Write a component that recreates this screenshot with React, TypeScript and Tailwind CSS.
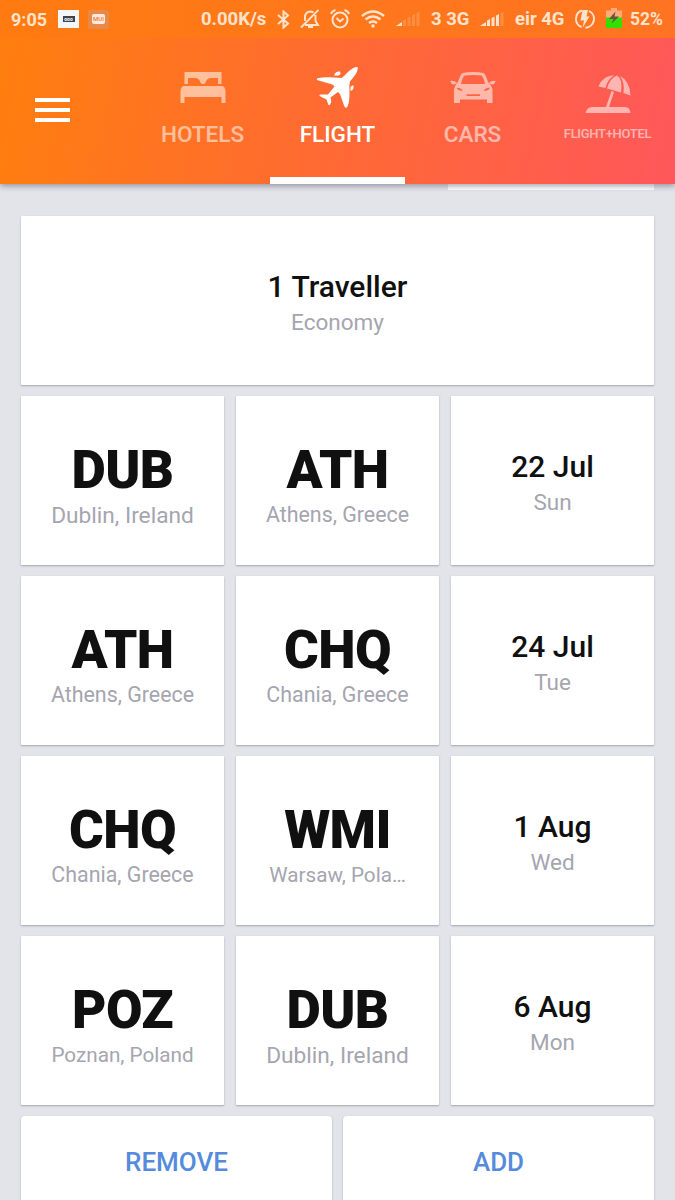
import React from 'react';
import clsx from 'clsx';

const flights = [
  { from: 'DUB', fromCity: 'Dublin, Ireland', to: 'ATH', toCity: 'Athens, Greece', date: '22 Jul', day: 'Sun' },
  { from: 'ATH', fromCity: 'Athens, Greece', to: 'CHQ', toCity: 'Chania, Greece', date: '24 Jul', day: 'Tue' },
  { from: 'CHQ', fromCity: 'Chania, Greece', to: 'WMI', toCity: 'Warsaw, Pola…', date: '1 Aug', day: 'Wed' },
  { from: 'POZ', fromCity: 'Poznan, Poland', to: 'DUB', toCity: 'Dublin, Ireland', date: '6 Aug', day: 'Mon' },
];

const citySizes: { [key: string]: string } = {
  'Dublin, Ireland': 'text-[22.700px] pt-px',
  'Athens, Greece': 'text-[21.400px]',
  'Chania, Greece': 'text-[21.400px]',
  'Warsaw, Pola…': 'text-[20.700px]',
  'Poznan, Poland': 'text-[20.700px]',
};

const BedIcon = () => (
  <svg width="46" height="32" viewBox="0 0 46 32" fill="currentColor">
    <path d="M4.500 0H41.500V12H38V6H31Q27 6 26 9.500Q25.500 12 23 12Q20.500 12 20 9.500Q19 6 15 6H8V12H4.500Z" />
    <path d="M4 14H42Q45.500 14.500 45.500 20V31H41.500V25H4.500V31H.5V20Q.5 14.500 4 14Z" />
  </svg>
);

const PlaneIcon = () => (
  <svg width="44" height="44" viewBox="0 0 44 44" fill="currentColor">
    <path d="M41.500 1C42.300 4 40.500 7.500 38 10.500L34 15.500L33.300 20C33.500 27 34 35 31.500 40.500Q29.500 43.500 28 39.500L24 28L22 26L14.500 31.500C15.500 35 15.500 37 13.500 39Q12.500 40 11.500 36.500L10.500 33.500L4.500 30.500Q1.500 28.500 5.500 28.500L12 28.500L18.500 20.500L16.500 18.500L2.500 14.500Q-1 13 2.500 12C9 10.500 16 11.500 25.500 12L28 10L33 5C36 2.500 39 .8 41.500 1Z" />
    <path d="M18 9.500Q19.500 5 24 5.500Q25.500 8.500 22.500 9.500ZM34.500 21Q38.500 17 37.500 22Q37 24.500 34.500 25Z" />
  </svg>
);

const CarIcon = () => (
  <svg width="46" height="32" viewBox="0 0 46 32" fill="currentColor">
    <path
      fillRule="evenodd"
      d="M12.500 1Q23-.8 33.500 1Q35.500 2 38 10Q42.500 14 42.500 19V31H37V27.500H10V31H4V19Q4 14 8 10Q10.500 2 12.500 1ZM14.500 3.500Q12 6 11 12H35Q34 6 31.500 3.500Q23 2.500 14.500 3.500ZM6.500 16Q10 15 13 18.500Q8.500 19.500 6.500 16ZM40 16Q36.500 15 33.500 18.500Q38 19.500 40 16ZM16.500 22.200H30V24H16.500Z"
    />
    <path d="M.3 9Q4 8 7 11Q4 13.500 1.500 11.500ZM45.700 9Q42 8 39 11Q42 13.500 44.500 11.500Z" />
  </svg>
);

const BeachIcon = () => (
  <svg width="46" height="39" viewBox="0 0 46 39" fill="currentColor">
    <path d="M.5 38Q2 32 7 32H21L26.500 16L29 17L24 32H40Q45 32 45.500 38Z" />
    <path d="M13.500 11.500Q17 1 29 .2Q22 5 20.500 13ZM22 13.500Q25 3 32 .5Q38 4 36 17.500ZM35 1Q45 6 45.500 20.500L38.500 18Q40 8 35 1Z" />
  </svg>
);

const BluetoothIcon = () => (
  <svg width="13" height="19" viewBox="0 0 13 19" fill="none" stroke="currentColor" strokeWidth="2">
    <path d="M1 5L11 13.500L6.500 17.500V1.500L11 5.500L1 14" />
  </svg>
);

const MutedBellIcon = () => (
  <svg width="20" height="20" viewBox="0 0 20 20" fill="none" stroke="currentColor" strokeWidth="1.900">
    <path d="M1 18.500L18.500 .8M5 12V8.500Q5 3 10 2.500Q12 2.500 13.500 3.500M15.500 6V12L18 16H5" />
    <path d="M8 18H13" strokeWidth="2" />
  </svg>
);

const AlarmIcon = () => (
  <svg width="20" height="20" viewBox="0 0 20 20" fill="none" stroke="currentColor" strokeWidth="2">
    <circle cx="10" cy="11" r="7.500" />
    <path d="M6.500 9L10 12.500L13.500 9.500M1 5Q2 2 5.500 1M19 5Q18 2 14.500 1" />
  </svg>
);

const WifiIcon = () => (
  <svg width="24" height="18" viewBox="0 0 24 18" fill="none" stroke="currentColor" strokeWidth="2.500">
    <path d="M1 6Q12-3 23 6M4.500 9.500Q12 3.500 19.500 9.500M8 13Q12 10 16 13" />
    <circle cx="12" cy="16" r="1.800" fill="currentColor" stroke="none" />
  </svg>
);

const SignalIcon = ({ level }: { level: number }) => (
  <svg width="24" height="16" viewBox="0 0 24 16" fill="currentColor">
    {['M0 15L6 11V15Z', 'M7 9.500L10 8V15H7Z', 'M11.500 7L14.500 5.500V15H11.500Z', 'M16 4.500L19 3V15H16Z', 'M20.500 2L23.500 .5V15H20.500Z'].map((d, i) => (
      <path key={d} d={d} opacity={i < level ? 1 : 0.22} />
    ))}
  </svg>
);

const ChargeIcon = () => (
  <svg width="20" height="20" viewBox="0 0 20 20" fill="none" stroke="currentColor" strokeWidth="1.900">
    <path d="M7 1.500A8.800 8.800 0 0 0 6.500 18M14 2A8.800 8.800 0 0 1 10.500 18.700" />
    <path d="M7.500 1H13L11.500 7.500H14.500L7.500 19L9 11.500H5.500Z" fill="currentColor" stroke="none" />
  </svg>
);

const BatteryIcon = () => (
  <svg width="16" height="20" viewBox="0 0 16 20">
    <path d="M0 2.500H5V0H11V2.500H16V10H0Z" fill="#ffab7c" />
    <path d="M0 9.500H16V20H0Z" fill="#32e000" />
    <path d="M9.500 3.500L3 11H7.500L5.500 15.500L13 8.500H8.500Z" fill="#6b5536" />
  </svg>
);

const tabs = [
  { label: 'HOTELS', icon: BedIcon },
  { label: 'FLIGHT', icon: PlaneIcon, active: true },
  { label: 'CARS', icon: CarIcon },
  { label: 'FLIGHT+HOTEL', icon: BeachIcon, small: true },
];

const Card = ({ className, children }: { className?: string; children: React.ReactNode }) => (
  <div
    className={clsx(
      'flex h-[169px] flex-col items-center rounded-[1px] bg-white whitespace-nowrap shadow-[0_1px_2px_rgba(40,40,70,0.35)]',
      className,
    )}
  >
    {children}
  </div>
);

const Airport = ({ code, city }: { code: string; city: string }) => (
  <Card className="pt-[43px]">
    <span className="text-[53px] leading-[62px] font-black tracking-[-0.6px] text-[#101010]">{code}</span>
    <span className={clsx('leading-[28px] text-[#a5a5af]', citySizes[city])}>{city}</span>
  </Card>
);

const Summary = ({ title, detail }: { title: string; detail: string }) => (
  <Card className="pt-[52px]">
    <span className="text-[30px] leading-[38px] font-medium text-[#101010]">{title}</span>
    <span className="text-[22.500px] leading-[32px] text-[#a5a5af]">{detail}</span>
  </Card>
);

const StatusBar = () => (
  <div className="flex h-[38px] items-center bg-linear-to-r from-[#ff7a10] to-[#ff7422] pr-3 pl-[11px] text-[18px] font-bold text-[#ffe3cc]">
    <span className="w-[47px]">9:05</span>
    <div className="flex h-[18px] w-[21px] items-center justify-center bg-[#f4f6f8]">
      <div className="h-[6px] w-[12px] bg-[#3b4350] text-center text-[5px] leading-[6px] text-white">ooo</div>
    </div>
    <div className="ml-[9px] flex h-[19px] w-[21px] items-center justify-center rounded-xs bg-[#e8894a]">
      <span className="rounded-xs bg-[#ffe9dc] px-px text-[6px] leading-[10px] font-medium text-[#ee7a35]">MUI</span>
    </div>
    <span className="ml-[92px] w-[76px] pt-[2px] text-[18.500px]">0.00K/s</span>
    <BluetoothIcon />
    <span className="ml-[10px]"><MutedBellIcon /></span>
    <span className="ml-[10px]"><AlarmIcon /></span>
    <span className="ml-[11px]"><WifiIcon /></span>
    <span className="ml-[11px]"><SignalIcon level={1} /></span>
    <span className="ml-[11px] w-[49px] pt-[2px] text-[18.500px]">3 3G</span>
    <SignalIcon level={4} />
    <span className="ml-[11px] w-[60px] pt-[2px] text-[18.500px]">eir 4G</span>
    <ChargeIcon />
    <span className="ml-[11px] w-[24px] -translate-y-px"><BatteryIcon /></span>
    <span className="text-[17.500px]">52%</span>
  </div>
);

const Header = () => (
  <header className="relative z-10 h-[184px] bg-[linear-gradient(102deg,#ff7f0d,#ff6a33_50%,#ff575b)] shadow-[0_2px_6px_rgba(20,25,45,0.4)]">
    <StatusBar />
    <div className="flex h-[146px]">
      <button className="flex w-[135px] flex-col gap-[6px] pt-[60px] pl-[35px]" aria-label="Menu">
        <span className="h-1 w-[35px] bg-white" />
        <span className="h-1 w-[35px] bg-white" />
        <span className="h-1 w-[35px] bg-white" />
      </button>
      {tabs.map(({ label, icon: Icon, active, small }) => (
        <button
          key={label}
          className={clsx(
            'flex w-[135px] flex-col items-center border-b-[7px] font-medium',
            active ? 'border-white text-white' : 'border-transparent text-white/55',
          )}
        >
          <span className={clsx('flex h-[54px]', active ? 'pt-[28px]' : small ? 'pt-[37px]' : 'pt-[34px]')}>
            <Icon />
          </span>
          <span
            className={clsx(
              'mt-[28px] leading-7',
              small ? 'text-[13px] tracking-[-0.300px]' : 'text-[22.500px]',
            )}
          >
            {label}
          </span>
        </button>
      ))}
    </div>
  </header>
);

export default function App() {
  return (
    <div className="h-[1200px] w-[675px] overflow-hidden bg-[#e3e4ea] font-[Roboto,sans-serif]">
      <Header />
      <main className="px-[21px]">
        <div className="ml-auto h-[6px] w-[206px] bg-white" />
        <div className="mt-[26px]">
          <Summary title="1 Traveller" detail="Economy" />
        </div>
        {flights.map((flight) => (
          <div key={flight.date} className="mt-[11px] grid grid-cols-3 gap-[12px]">
            <Airport code={flight.from} city={flight.fromCity} />
            <Airport code={flight.to} city={flight.toCity} />
            <Summary title={flight.date} detail={flight.day} />
          </div>
        ))}
        <div className="mt-[11px] grid grid-cols-2 gap-[11px]">
          {['REMOVE', 'ADD'].map((action) => (
            <button
              key={action}
              className="h-[92px] rounded-[4px] bg-white text-[26px] leading-[92px] font-medium text-[#548bdc] shadow-[0_1px_2px_rgba(40,40,70,0.35)]"
            >
              {action}
            </button>
          ))}
        </div>
      </main>
    </div>
  );
}
